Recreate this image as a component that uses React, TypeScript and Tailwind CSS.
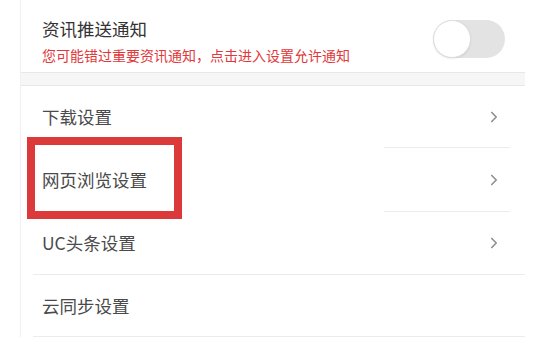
import { ChevronRight } from "lucide-react";

type Row = { label: string; height: string; arrow: boolean; line: string };

const rows: Row[] = [
  { label: "下载设置", height: "h-[61px]", arrow: true, line: "ml-[363px] mr-[15px]" },
  { label: "网页浏览设置", height: "h-[63px]", arrow: true, line: "ml-[363px] mr-[15px]" },
  { label: "UC头条设置", height: "h-[62px]", arrow: true, line: "ml-[12px]" },
  { label: "云同步设置", height: "h-[61px]", arrow: false, line: "ml-[12px]" },
];

function Toggle() {
  return (
    <div className="relative h-[38px] w-[72px] rounded-full bg-[#e3e3e3]">
      <div className="absolute left-0 top-0 h-[38px] w-[38px] rounded-full border border-[#dedede] bg-white shadow-[0_1px_2px_rgba(0,0,0,0.08)]" />
    </div>
  );
}

export default function App() {
  return (
    <div className="relative h-[340px] w-[540px] overflow-hidden bg-white font-['Noto_Sans_CJK_SC','Noto_Sans',sans-serif]">
      <div className="ml-[20px] mr-[15px] border-l border-[#f0f0f0]">
        <section className="flex h-[72px] items-start justify-between pl-[21px] pr-[20px] pt-[17px]">
          <div>
            <p className="text-[17.5px] leading-[24px] text-[#333]">资讯推送通知</p>
            <p className="mt-[4px] text-[14px] leading-[20px] text-[#e0383b]">
              您可能错过重要资讯通知，点击进入设置允许通知
            </p>
          </div>
          <div className="mt-[3px]">
            <Toggle />
          </div>
        </section>
        <div className="h-[14px] border-y border-[#e8e8e8] bg-[#f6f6f6]" />

        {rows.map((row) => (
          <div key={row.label}>
            <div className={`flex items-center justify-between pl-[21px] pr-[22px] ${row.height}`}>
              <span className="text-[17.5px] leading-[24px] text-[#4a4a4a]">{row.label}</span>
              {row.arrow && <ChevronRight className="h-[18px] w-[18px] text-[#8f8f8f]" strokeWidth={2.2} />}
            </div>
            <div className={`h-px bg-[#ececec] ${row.line}`} />
          </div>
        ))}
      </div>

      <div className="absolute left-[27px] top-[137px] h-[82px] w-[155px] border-[8px] border-[#dc3a3a]" />
    </div>
  );
}
